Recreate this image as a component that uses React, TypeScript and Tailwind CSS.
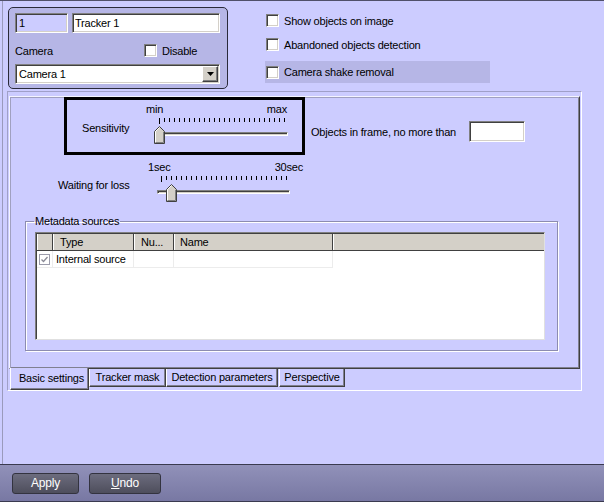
import React from "react";

const sunken =
  "border border-t-[#808080] border-l-[#808080] border-r-white border-b-white shadow-[inset_1px_1px_0_#404040,inset_-1px_-1px_0_#d4d0c8]";
const raised =
  "border border-t-white border-l-white border-r-[#404040] border-b-[#404040] shadow-[inset_-1px_-1px_0_#808080]";

function CheckBox() {
  return <div className={`w-[13px] h-[13px] shrink-0 bg-white ${sunken}`} />;
}

function Ticks() {
  const xs = Array.from({ length: 26 }, (_, i) => 0.5 + i * 5);
  return (
    <svg width="127" height="6" className="block">
      {xs.map((x, i) => (
        <line key={i} x1={x} y1={0} x2={x} y2={i === 0 ? 6 : 4} stroke="#000" strokeWidth="1" />
      ))}
    </svg>
  );
}

function Thumb() {
  return (
    <svg width="11" height="18" className="block">
      <polygon points="0.5,17.5 0.5,5.5 5.5,0.5 10.5,5.5 10.5,17.5" fill="#d4d0c8" stroke="#404040" />
      <polyline points="1.5,16.5 1.5,5.5 5.5,1.5" fill="none" stroke="#ffffff" />
      <polyline points="9.5,5.8 9.5,16.5 1.5,16.5" fill="none" stroke="#808080" />
    </svg>
  );
}

function Slider({ min, max, rowWidth, thumbAt }: { min: string; max: string; rowWidth: string; thumbAt: string }) {
  return (
    <div className="relative w-[156px] h-[40px]">
      <div className={`flex justify-between leading-[12px] h-[12px] ${rowWidth}`}>
        <span>{min}</span>
        <span>{max}</span>
      </div>
      <div className="mt-[3px] ml-[13px]">
        <Ticks />
      </div>
      <div className={`mt-[8px] ml-[9px] w-[133px] h-[4px] bg-[#e8e8e8] ${sunken}`} />
      <div className={`absolute top-[23px] ${thumbAt}`}>
        <Thumb />
      </div>
    </div>
  );
}

export default function App() {
  return (
    <div className="w-[604px] h-[502px] bg-[#ccccff] border-t border-[#50506a] flex flex-col text-[11px] tracking-[-0.2px] text-black font-['Liberation_Sans',Arial,sans-serif] overflow-hidden">
      <div className="h-[463px] ml-[2px] border-l border-[#9a9abc] flex flex-col">
        {/* top section */}
        <div className="h-[90px] flex">
          <div className="ml-[5px] mt-[6px] w-[220px] h-[82px] border border-[#2a2a3a] rounded-[5px] bg-[#b6b6e6]">
            <div className="mt-[5px] ml-[6px] flex">
              <div className={`w-[53px] h-[20px] bg-[#ccccff] pl-[3px] leading-[19px] ${sunken}`}>1</div>
              <div className={`ml-[4px] w-[148px] h-[20px] bg-white pl-[2px] leading-[19px] ${sunken}`}>Tracker 1</div>
            </div>
            <div className="mt-[11px] ml-[6px] h-[13px] flex items-center">
              <span className="w-[129px] pt-[1px]">Camera</span>
              <CheckBox />
              <span className="ml-[5px] pt-[1px]">Disable</span>
            </div>
            <div className={`mt-[7px] ml-[6px] w-[205px] h-[20px] bg-white flex items-center justify-between pr-[1px] ${sunken}`}>
              <span className="pl-[3px] pt-[1px]">Camera 1</span>
              <div className={`w-[16px] h-[16px] bg-[#d4d0c8] flex items-center justify-center ${raised}`}>
                <svg width="7" height="4" className="block">
                  <polygon points="0,0 7,0 3.5,4" fill="#000" />
                </svg>
              </div>
            </div>
          </div>
          <div className="ml-[37px] flex flex-col">
            <div className="mt-[13px] h-[13px] pl-[1px] flex items-center">
              <CheckBox />
              <span className="ml-[5px] pt-[1px]">Show objects on image</span>
            </div>
            <div className="mt-[11px] h-[13px] pl-[1px] flex items-center">
              <CheckBox />
              <span className="ml-[5px] pt-[1px]">Abandoned objects detection</span>
            </div>
            <div className="mt-[10px] h-[22px] w-[225px] pl-[1px] bg-[#b6b6e6] flex items-center">
              <CheckBox />
              <span className="ml-[5px] pt-[1px]">Camera shake removal</span>
            </div>
          </div>
        </div>

        {/* tab control frame */}
        <div className="ml-[4px] w-[575px] h-[300px] border border-t-[#a0a0c8] border-l-[#a0a0c8] border-r-white border-b-white">
          <div className="ml-[1px] mt-[4px] w-[571px] h-[273px] border border-t-[#f4f4ff] border-l-[#f4f4ff] border-r-[#404040] border-b-[#404040] shadow-[inset_1px_1px_0_#a0a0c0,inset_-1px_-1px_0_#808090]">
            <div className="flex">
              <div className="ml-[54px] w-[241px] h-[58px] border-[3px] border-black flex">
                <div className="ml-[15px] mt-[22px] w-[66px] leading-[12px]">Sensitivity</div>
                <div className="mt-[3px]">
                  <Slider min="min" max="max" rowWidth="w-[141px]" thumbAt="left-[8px]" />
                </div>
              </div>
              <div className="ml-[6px] mt-[24px] w-[214px] h-[21px] flex items-center justify-between">
                <span className="pt-[1px]">Objects in frame, no more than</span>
                <div className={`w-[56px] h-[21px] bg-white ${sunken}`} />
              </div>
            </div>
            <div className="flex mt-[6px]">
              <div className="ml-[48px] mt-[18px] w-[90px] leading-[12px]">Waiting for loss</div>
              <Slider min="1sec" max="30sec" rowWidth="w-[155px]" thumbAt="left-[18px]" />
            </div>
            <fieldset className="mt-[14px] ml-[15px] w-[533px] border border-[#8c8cb0] shadow-[inset_1px_1px_0_#ffffff,1px_1px_0_#ffffff]">
              <legend className="ml-[8px] px-[1px] leading-[12px]">Metadata sources</legend>
              <div className="ml-[9px] mt-[5px] mb-[10px] w-[510px] h-[108px] bg-white border border-t-[#808080] border-l-[#808080] border-r-[#e0e0e0] border-b-[#e0e0e0] shadow-[inset_1px_1px_0_#404040]">
                <div className="ml-[1px] mt-[1px] h-[17px] flex bg-[#d4d0c8] border-b border-[#404040] leading-[17px]">
                  <div className="w-[16px] border-r border-[#404040] shadow-[inset_1px_0_0_#ffffff]" />
                  <div className="w-[81px] pl-[7px] border-r border-[#404040] shadow-[inset_1px_0_0_#ffffff]">Type</div>
                  <div className="w-[40px] pl-[7px] border-r border-[#404040] shadow-[inset_1px_0_0_#ffffff]">Nu...</div>
                  <div className="w-[159px] pl-[6px] border-r border-[#404040] shadow-[inset_1px_0_0_#ffffff]">Name</div>
                  <div className="flex-1 shadow-[inset_1px_0_0_#ffffff]" />
                </div>
                <div className="ml-[1px] h-[17px] flex leading-[17px]">
                  <div className="w-[16px] border-r border-b border-[#ececec] flex items-center justify-center">
                    <div className="w-[11px] h-[11px] border border-[#9c9cab] bg-white flex items-center justify-center">
                      <svg width="7" height="7" className="block">
                        <polyline points="0.5,3.5 2.5,5.5 6.5,1" fill="none" stroke="#8a8a96" strokeWidth="1.3" />
                      </svg>
                    </div>
                  </div>
                  <div className="w-[81px] pl-[3px] border-r border-b border-[#ececec]">Internal source</div>
                  <div className="w-[40px] border-r border-b border-[#ececec]" />
                  <div className="w-[159px] border-r border-b border-[#ececec]" />
                </div>
              </div>
            </fieldset>
          </div>
          <div className="ml-[2px] flex items-start">
            <div className="relative -mt-[1px] w-[79px] h-[22px] pl-[4px] bg-[#ccccff] border-l border-r border-b border-l-white border-r-[#404040] border-b-[#404040] shadow-[inset_-1px_-1px_0_#808090] flex items-center justify-center">
              Basic settings
            </div>
            <div className="w-[77px] h-[18px] border-l border-r border-b border-l-white border-r-[#404040] border-b-[#404040] shadow-[inset_-1px_-1px_0_#808090] flex items-center justify-center">
              Tracker mask
            </div>
            <div className="w-[112px] h-[18px] border-l border-r border-b border-l-white border-r-[#404040] border-b-[#404040] shadow-[inset_-1px_-1px_0_#808090] flex items-center justify-center">
              Detection parameters
            </div>
            <div className="ml-[1px] w-[66px] h-[18px] border-l border-r border-b border-l-white border-r-[#404040] border-b-[#404040] shadow-[inset_-1px_-1px_0_#808090] flex items-center justify-center">
              Perspective
            </div>
          </div>
        </div>
      </div>

      {/* bottom toolbar */}
      <div className="h-[38px] border-t border-b border-[#3a3a50] bg-linear-to-b from-[#9191b9] to-[#7878a3] flex items-center pl-[12px]">
        <div className="w-[67px] h-[21px] rounded-[3px] border border-[#33333f] bg-linear-to-b from-[#6c6c7e] to-[#4e4e5c] text-white text-[12px] flex items-center justify-center">
          Apply
        </div>
        <div className="ml-[10px] w-[72px] h-[21px] rounded-[3px] border border-[#33333f] bg-linear-to-b from-[#6c6c7e] to-[#4e4e5c] text-white text-[12px] flex items-center justify-center">
          <span>
            <span className="underline">U</span>ndo
          </span>
        </div>
      </div>
    </div>
  );
}
